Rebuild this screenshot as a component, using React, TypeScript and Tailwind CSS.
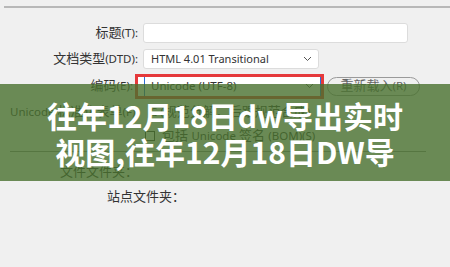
const Chevron = () => (
  <svg width="9" height="6" viewBox="0 0 9 6" className="shrink-0">
    <path d="M1 1 L4.5 4.5 L8 1" fill="none" stroke="#555" strokeWidth="1" />
  </svg>
)

const ui = "font-['Noto_Sans','Noto_Sans_CJK_SC',sans-serif]"

// latin bits in the dialog are set smaller than the CJK glyphs
const L = (props: { children: string }) => <span className="text-[11.5px]">{props.children}</span>

const Label = (props: { children: React.ReactNode; w?: string }) => (
  <div className={"shrink-0 whitespace-nowrap text-right text-[13px] text-[#333] " + (props.w ?? "w-[138px]")}>{props.children}</div>
)

export default function App() {
  return (
    <div className={"relative w-[450px] h-[267px] overflow-hidden bg-[#f0f0f0] " + ui}>
      <div className="flex flex-col pt-[6px]">
        <div className="ml-[4px] h-[2px] bg-[#b8b8b8]"></div>

        {/* title */}
        <div className="mt-[15px] flex h-[20px] items-center">
          <Label>标题<L>(T):</L></Label>
          <div className="ml-[5px] h-[20px] w-[265px] rounded-[3px] border border-[#dcdcdc] bg-white"></div>
        </div>

        {/* doctype */}
        <div className="mt-[6px] flex h-[20px] items-center">
          <Label>文档类型<L>(DTD):</L></Label>
          <div className="ml-[5px] flex h-[20px] w-[176px] items-center justify-between rounded-[3px] border border-[#dcdcdc] bg-white pl-[7px] pr-[6px]">
            <span className="text-[11px] text-[#333]">HTML 4.01 Transitional</span>
            <Chevron />
          </div>
        </div>

        {/* encoding */}
        <div className="mt-[5px] flex h-[24px] items-center">
          <Label w="w-[133px]">编码<L>(E):</L></Label>
          <div className="ml-[2px] flex h-[25px] w-[189px] items-center border-[3px] border-[#e5393b] bg-white">
            <div className="ml-[6px] flex h-full flex-1 items-center justify-between border-l border-r border-[#2d6fd6] pl-[6px] pr-[6px]">
              <span className="text-[11.5px] text-[#333]">Unicode (UTF-8)</span>
              <Chevron />
            </div>
          </div>
          <div className="ml-[3px] flex h-[19px] w-[93px] items-center justify-center rounded-full border border-[#9a9a9a] text-[13px] text-[#666]">
            重新载入<L>(R)</L>
          </div>
        </div>

        {/* normalization */}
        <div className="mt-[4px] flex h-[20px] items-center">
          <div className="w-[138px] shrink-0 whitespace-nowrap pl-[10px] text-[13px] text-[#333]"><L>Unicode </L>标准化表单<L>(F):</L></div>
          <span className="ml-[12px] whitespace-nowrap text-[13px] text-[#333]"><L>C (</L>规范分解，后跟规范合成<L>)</L></span>
        </div>

        {/* bom */}
        <div className="mt-[4px] flex h-[20px] items-center pl-[145px]">
          <div className="h-[10px] w-[10px] border border-[#333] bg-white"></div>
          <span className="ml-[7px] whitespace-nowrap text-[13px] text-[#333]">包括 <L>Unicode </L>签名 <L>(BOM)(S)</L></span>
        </div>

        <div className="ml-[10px] mt-[5px] h-px w-[416px] bg-[#8a8a8a]"></div>

        <div className="mt-[12px] flex h-[16px] items-center">
          <Label>文件文件夹：</Label>
        </div>

        <div className="mt-[9px] flex h-[16px] items-center pl-[107px] text-[13px] text-[#333]">站点文件夹：</div>
      </div>

      {/* green title band */}
      <div className="absolute left-0 right-0 top-[84px] flex h-[97px] flex-col items-center justify-center bg-[rgba(72,112,46,0.8)] font-['Noto_Sans_CJK_SC',sans-serif] text-[30px] font-bold leading-[36px] text-white">
        <div>往年12月18日dw导出实时</div>
        <div>视图,往年12月18日DW导</div>
      </div>
    </div>
  )
}
